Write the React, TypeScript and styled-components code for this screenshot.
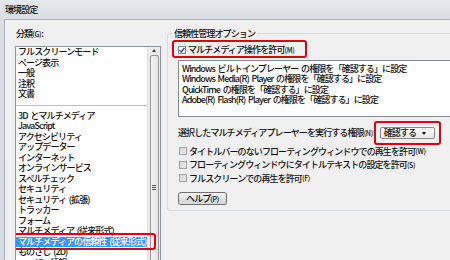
import React from "react";
import styled, { createGlobalStyle, css } from "styled-components";

const GlobalStyle = createGlobalStyle`
  html, body { margin: 0; padding: 0; overflow: hidden; background: #dfe3e8; }
  body { font-family: "Noto Sans CJK JP", "Noto Sans", sans-serif; color: #111; }
`;

const Window = styled.div`
  width: 470px;
  height: 280px;
  display: flex;
  flex-direction: column;
  background: linear-gradient(#e6e9ed, #d9dde3 20px, #d7dbe1);
  font-size: 9px;
  font-weight: 500;
  letter-spacing: -0.9px;
  word-spacing: 1.6px;
`;

const TitleBar = styled.div`
  height: 19px;
  line-height: 20px;
  padding-left: 5px;
  color: #111;
  flex: none;
`;

const Client = styled.div`
  flex: 1;
  margin-left: 4px;
  border-top: 1px solid #a9b1bb;
  border-left: 1px solid #a9b1bb;
  background: #f0f0f0;
  display: flex;
  align-items: flex-start;
  gap: 6px;
  padding: 8px 0 0 10px;
  overflow: hidden;
`;

const LeftPane = styled.div`
  width: 146px;
  flex: none;
  display: flex;
  flex-direction: column;
`;

const PaneLabel = styled.div`
  height: 11px;
  line-height: 11px;
  padding-left: 1px;
  margin-bottom: 7px;
`;

const Key = styled.span`
  font-size: 7px;
  letter-spacing: -0.3px;
`;

const CategoryList = styled.div`
  height: 240px;
  border: 1px solid #8e949b;
  background: #fff;
  display: flex;
  overflow: hidden;
`;

const Items = styled.div`
  flex: 1;
  display: flex;
  flex-direction: column;
`;

const Item = styled.div<{ $selected?: boolean }>`
  position: relative;
  height: 10.5px;
  line-height: 10.5px;
  padding-left: 2px;
  white-space: nowrap;
  ${(p) =>
    p.$selected &&
    css`
      background: #3399ff;
      color: #fff;
      &::after {
        content: "";
        position: absolute;
        z-index: 2;
        left: -4px;
        right: -9px;
        top: -4px;
        bottom: -3px;
        border: 2.5px solid #e8000e;
        border-radius: 3px;
        pointer-events: none;
      }
    `}
`;

const Separator = styled.div`
  height: 11px;
  display: flex;
  align-items: center;
  &::before {
    content: "";
    flex: 1;
    height: 1px;
    background: #9cc6ec;
  }
`;

const ScrollBar = styled.div`
  width: 12px;
  flex: none;
  background: #ebebeb;
  border-left: 1px solid #e2e2e2;
  display: flex;
  flex-direction: column;
  align-items: center;
`;

const ScrollArrow = styled.div`
  height: 10px;
  width: 100%;
  display: flex;
  align-items: center;
  justify-content: center;
  &::before {
    content: "";
    border-left: 2.5px solid transparent;
    border-right: 2.5px solid transparent;
    border-bottom: 3px solid #3c3c3c;
  }
`;

const Thumb = styled.div`
  margin-top: 1px;
  width: 9px;
  height: 266px;
  border: 1px solid #979797;
  border-radius: 2px;
  background: linear-gradient(90deg, #f4f4f4, #e2e2e2);
  display: flex;
  justify-content: center;
  padding-top: 129px;
  box-sizing: border-box;
`;

const Grip = styled.div`
  width: 4px;
  height: 5px;
  background: repeating-linear-gradient(#555 0 1px, transparent 1px 2px);
`;

const Group = styled.fieldset`
  margin: 0;
  width: 300px;
  border: 1px solid #d5dbe2;
  border-radius: 3px;
  padding: 5px 10px 5px 10px;
  display: flex;
  flex-direction: column;
  align-items: flex-start;
  min-width: 0;
`;

const Legend = styled.legend`
  padding: 0 2px;
  margin-left: -6px;
  height: 11px;
  line-height: 11px;
`;

const CheckRow = styled.label<{ $marked?: boolean }>`
  position: relative;
  display: inline-flex;
  align-items: center;
  height: 11px;
  white-space: nowrap;
  ${(p) =>
    p.$marked &&
    css`
      &::after {
        content: "";
        position: absolute;
        left: -6px;
        right: -13px;
        top: -4px;
        bottom: -3px;
        border: 2.5px solid #e8000e;
        border-radius: 3px;
        pointer-events: none;
      }
    `}
`;

const Box = styled.span<{ $checked?: boolean }>`
  width: 8px;
  height: 8px;
  box-sizing: border-box;
  margin: 0 2px 0 0;
  flex: none;
  border: 1px solid ${(p) => (p.$checked ? "#7b8ea5" : "#a3a3a3")};
  background: ${(p) =>
    p.$checked ? "linear-gradient(135deg, #ffffff, #e6ecf3)" : "linear-gradient(135deg, #d4d4d4, #ececec)"};
  display: flex;
  align-items: center;
  justify-content: center;
`;

const PlayerList = styled.div`
  margin-top: 5px;
  width: 100%;
  height: 57px;
  box-sizing: border-box;
  border: 1px solid #868b92;
  background: #fff;
  padding: 3px 3px;
`;

const PlayerLine = styled.div`
  height: 10.4px;
  line-height: 10.4px;
  white-space: nowrap;
`;

const PermRow = styled.div`
  margin-top: 9.5px;
  display: flex;
  align-items: center;
  height: 12px;
  white-space: nowrap;
`;

const Combo = styled.div`
  position: relative;
  margin-left: 5px;
  width: 55px;
  height: 12px;
  box-sizing: border-box;
  border: 1px solid #8a8a8a;
  border-radius: 2px;
  background: linear-gradient(#fbfbfb, #eaeaea);
  display: flex;
  align-items: center;
  padding-left: 3px;
  &::before {
    content: "";
    position: absolute;
    right: 8px;
    top: 4px;
    border-left: 2.5px solid transparent;
    border-right: 2.5px solid transparent;
    border-top: 3px solid #111;
  }
  &::after {
    content: "";
    position: absolute;
    left: -7px;
    right: -7px;
    top: -7px;
    bottom: -7px;
    border: 2.5px solid #e8000e;
    border-radius: 3px;
    pointer-events: none;
  }
`;

const Options = styled.div`
  margin-top: 7px;
  display: flex;
  flex-direction: column;
  gap: 2.5px;
  padding-left: 1px;
`;

const HelpButton = styled.button`
  margin-top: 8px;
  width: 49px;
  height: 13.5px;
  padding: 0;
  border: 1px solid #707070;
  border-radius: 3px;
  background: linear-gradient(#f3f3f3, #e6e6e6 50%, #d8d8d8 51%, #dddddd);
  font: inherit;
  letter-spacing: inherit;
  color: #111;
  line-height: 11px;
`;

type Cat = string | null;
const categories: Cat[] = [
  "フルスクリーンモード",
  "ページ表示",
  "一般",
  "注釈",
  "文書",
  null,
  "3D とマルチメディア",
  "JavaScript",
  "アクセシビリティ",
  "アップデーター",
  "インターネット",
  "オンラインサービス",
  "スペルチェック",
  "セキュリティ",
  "セキュリティ (拡張)",
  "トラッカー",
  "フォーム",
  "マルチメディア (従来形式)",
  "マルチメディアの信頼性 (従来形式)",
  "ものさし (2D)",
  "ユーザー情報",
];

const players = [
  "Windows ビルトインプレーヤー の権限を「確認する」に設定",
  "Windows Media(R) Player の権限を「確認する」に設定",
  "QuickTime の権限を「確認する」に設定",
  "Adobe(R) Flash(R) Player の権限を「確認する」に設定",
];

const options: [string, string][] = [
  ["タイトルバーのないフローティングウィンドウでの再生を許可", "(W)"],
  ["フローティングウィンドウにタイトルテキストの設定を許可", "(S)"],
  ["フルスクリーンでの再生を許可", "(F)"],
];

const Check = () => (
  <svg width="6" height="6" viewBox="0 0 6 6">
    <path d="M0.6 3.2 L2.3 5 L5.4 0.8" fill="none" stroke="#1f3a8a" strokeWidth="1.2" />
  </svg>
);

export default function App() {
  return (
    <>
      <GlobalStyle />
      <Window>
        <TitleBar>環境設定</TitleBar>
        <Client>
          <LeftPane>
            <PaneLabel>
              分類<Key>(G)</Key>:
            </PaneLabel>
            <CategoryList>
              <Items>
                {categories.map((c, i) =>
                  c === null ? (
                    <Separator key={i} />
                  ) : (
                    <Item key={i} $selected={c === "マルチメディアの信頼性 (従来形式)"}>
                      {c}
                    </Item>
                  )
                )}
              </Items>
              <ScrollBar>
                <ScrollArrow />
                <Thumb>
                  <Grip />
                </Thumb>
              </ScrollBar>
            </CategoryList>
          </LeftPane>
          <Group>
            <Legend>信頼性管理オプション</Legend>
            <CheckRow $marked>
              <Box $checked>
                <Check />
              </Box>
              マルチメディア操作を許可<Key>(M)</Key>
            </CheckRow>
            <PlayerList>
              {players.map((p) => (
                <PlayerLine key={p}>{p}</PlayerLine>
              ))}
            </PlayerList>
            <PermRow>
              選択したマルチメディアプレーヤーを実行する権限<Key>(N)</Key>:
              <Combo>確認する</Combo>
            </PermRow>
            <Options>
              {options.map(([t, k]) => (
                <CheckRow key={t}>
                  <Box />
                  {t}
                  <Key>{k}</Key>
                </CheckRow>
              ))}
            </Options>
            <HelpButton>
              ヘルプ<Key>(P)</Key>
            </HelpButton>
          </Group>
        </Client>
      </Window>
    </>
  );
}
